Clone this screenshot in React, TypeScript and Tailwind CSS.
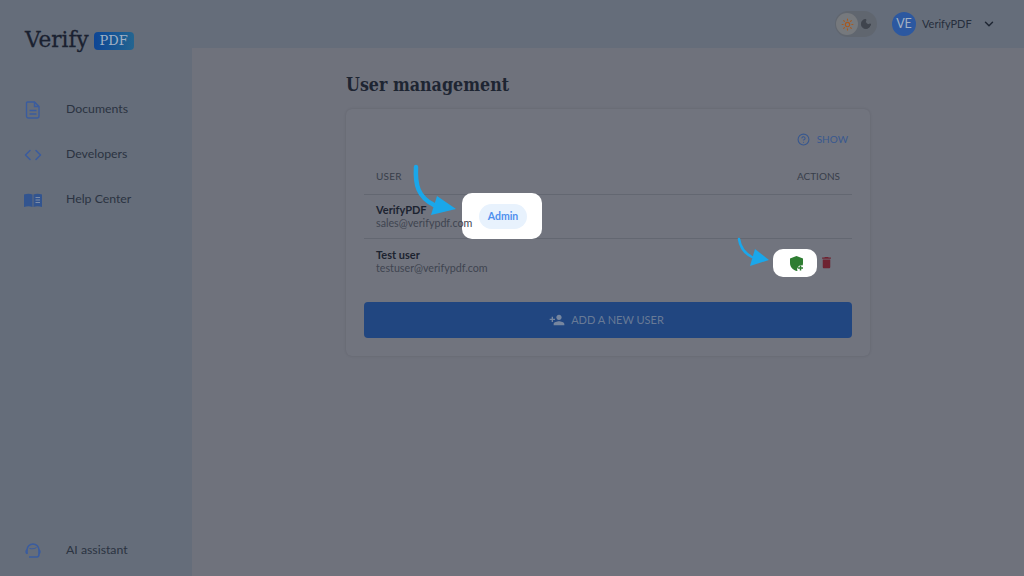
import { ChevronDown, CircleHelp, Code, Moon, Sun } from "lucide-react";
import { MdDelete, MdPersonAdd } from "react-icons/md";

const font = { fontFamily: '"Lato", "Open Sans", sans-serif' };
const serif = { fontFamily: '"DejaVu Serif", serif' };

const DocIcon = () => (
  <svg width="16" height="18" viewBox="0 0 16 18" fill="none" stroke="#3a5c9f" strokeWidth="1.4">
    <path d="M2.5 1h7l4.5 4.5V15a2 2 0 0 1-2 2H3.5a2 2 0 0 1-2-2V2a1 1 0 0 1 1-1z" />
    <path d="M9.5 1v4.500h4.500M4.500 9.500h7M4.500 13h7" />
  </svg>
);

const BookIcon = () => (
  <svg width="18" height="14" viewBox="0 0 18 14">
    <path d="M0 1.500C3 .5 6 .5 8.500 1.500V14C6 13 3 13 0 14z" fill="#32548f" />
    <path d="M9.500 1.500C12 .5 15 .5 18 1.500V14c-3-1-6-1-8.500 0z" fill="#32548f" />
    <path d="M11.500 4.500h4.500M11.500 7h4.500M11.500 9.500h4.500" stroke="#7d8ca7" strokeWidth="1" />
  </svg>
);

const AssistantIcon = () => (
  <svg width="16" height="15" viewBox="0 0 16 15" fill="none" stroke="#3a5c9f" strokeWidth="1.6">
    <path d="M2 11V7a6 6 0 0 1 12 0v4" />
    <path d="M2 10.500c-1.200-.5-1.200-3 0-3.500M14 10.500c1.200-.5 1.200-3 0-3.500M4 14h8c1.500 0 2-1.500 2-3" />
    <path d="M4.500 5.500c2 .5 5 .5 7-1" strokeWidth="1" />
  </svg>
);

const ShieldPlus = () => (
  <svg width="14" height="15" viewBox="0 0 14 15">
    <path d="M6.500 0L13 2.400V7c0 1-.1 1.700-.4 2.400A4 4 0 0 0 7.600 14.700L6.500 15C2.800 13.900 0 10.800 0 7V2.400z" fill="#2e7d32" />
    <path d="M10.500 9.500v5M8 12h5" stroke="#2e7d32" strokeWidth="1.500" />
  </svg>
);

const NavItem = ({ icon, label }: { icon: React.ReactNode; label: string }) => (
  <div className="flex h-[45px] items-center">
    <div className="flex w-[66px] justify-center">{icon}</div>
    <span className="text-[12.3px] text-[#2b3341]">{label}</span>
  </div>
);

export default function App() {
  return (
    <div className="flex h-[576px] w-[1024px] overflow-hidden bg-[#656d7a]" style={font}>
      <aside className="flex w-[192px] shrink-0 flex-col">
        <div className="flex h-[87px] items-center gap-[5px] pb-[7px] pl-[25px]">
          <span className="text-[21.5px] text-[#1a2130] [-webkit-text-stroke:0.3px_#1a2130]" style={serif}>
            Verify
          </span>
          <span
            className="mt-[2px] rounded-[4px] bg-gradient-to-r from-[#0e4595] to-[#246590] px-[6px] text-[13px] leading-[18px] text-[#a2b0c2]"
            style={serif}
          >
            PDF
          </span>
        </div>
        <nav className="flex flex-col">
          <NavItem icon={<DocIcon />} label="Documents" />
          <NavItem icon={<Code size={18} color="#3a5c9f" />} label="Developers" />
          <NavItem icon={<BookIcon />} label="Help Center" />
        </nav>
        <div className="mt-auto pb-[3px]">
          <NavItem icon={<AssistantIcon />} label="AI assistant" />
        </div>
      </aside>

      <div className="flex min-w-0 flex-1 flex-col">
        <header className="flex h-[48px] shrink-0 items-center justify-end pr-[28px]">
          <div className="mr-[15px] flex h-[26px] w-[42px] items-center justify-between rounded-full bg-[#60666f] px-[1px]">
            <span className="flex h-[22px] w-[22px] items-center justify-center rounded-full bg-[#76797d]">
              <Sun size={13} color="#a8591f" />
            </span>
            <Moon size={12} color="#3f444d" fill="#3f444d" className="mr-[4px]" />
          </div>
          <span className="flex h-[24px] w-[24px] items-center justify-center rounded-full bg-[#2c58a0] text-[12.5px] text-[#a2b0c2]">
            VE
          </span>
          <span className="ml-[6px] w-[48px] text-[11px] whitespace-nowrap text-[#262e3c]">VerifyPDF</span>
          <ChevronDown size={14} color="#1f2633" strokeWidth={2.500} className="ml-[12px]" />
        </header>

        <main className="flex-1 bg-[#6f727c] pl-[154px]">
          <h1 className="mt-[24px] text-[17.7px] font-bold leading-[26px] font-stretch-condensed text-[#1e2532]" style={serif}>
            User management
          </h1>
          <section className="relative mt-[11px] h-[247px] w-[524px] rounded-[6px] bg-[#71747e] px-[18px] shadow-[0_0_3px_rgba(0,0,0,0.12)]">
            <div className="flex h-[58px] items-center justify-end gap-[7px] pr-[4px] pt-[3px] text-[10px] text-[#38588f]">
              <CircleHelp size={13} />
              <span>SHOW</span>
            </div>
            <div className="flex h-[28px] items-start justify-between border-b border-[#636771] px-[12px] text-[10px] text-[#383e4a]">
              <span className="mt-[2px] tracking-[0.2px]">USER</span>
              <span className="mt-[2px]">ACTIONS</span>
            </div>
            <div className="flex h-[44px] flex-col justify-center border-b border-[#636771] px-[12px] pb-[2px] text-[11px] leading-[13px]">
              <span className="font-bold text-[#1c2330]">VerifyPDF</span>
              <span className="relative z-10 text-[10.7px] text-[#3f4450]">sales@verifypdf.com</span>
            </div>
            <div className="flex h-[43px] flex-col justify-center px-[12px] text-[11px] leading-[13px]">
              <span className="font-bold text-[#1c2330]">Test user</span>
              <span className="text-[10.7px] text-[#3f4450]">testuser@verifypdf.com</span>
            </div>
            <button className="mt-[20px] flex h-[36px] w-full items-center justify-center gap-[6px] rounded-[4px] bg-[#214680] pr-[3px] text-[11px] text-[#687a96]">
              <MdPersonAdd size={16} color="#76869f" />
              ADD A NEW USER
            </button>

            {/* white highlight over the Admin chip */}
            <div className="absolute left-[116px] top-[84px] flex h-[46px] w-[80px] items-center justify-center rounded-[10px] bg-white">
              <span className="ml-[2px] mt-[1px] flex h-[25px] w-[48px] items-center justify-center rounded-full bg-[#e8f2fd] text-[10.5px] font-bold text-[#4f8fee]">
                Admin
              </span>
            </div>
            {/* white highlight over the shield action */}
            <div className="absolute left-[427px] top-[140px] flex h-[28px] w-[44px] items-center justify-center rounded-[10px] bg-white">
              <span className="ml-[3px]">
                <ShieldPlus />
              </span>
            </div>
            <div className="absolute left-[473px] top-[146px]">
              <MdDelete size={15} color="#6e2230" />
            </div>
            {/* arrows */}
            <svg className="absolute left-[60px] top-[54px] z-20" width="70" height="56" viewBox="0 0 70 56" fill="none">
              <path d="M10 4C9 22 12 34 28 42" stroke="#1aa7ea" strokeWidth="4.500" strokeLinecap="round" />
              <path d="M25 52L31 33L50 46z" fill="#1aa7ea" />
            </svg>
            <svg className="absolute left-[388px] top-[127px] z-20" width="40" height="32" viewBox="0 0 40 32" fill="none">
              <path d="M5 3C6 10 10 17 18 21" stroke="#1aa7ea" strokeWidth="2.500" strokeLinecap="round" />
              <path d="M16 30L35 24L21 13z" fill="#1aa7ea" />
            </svg>
          </section>
        </main>
      </div>
    </div>
  );
}
